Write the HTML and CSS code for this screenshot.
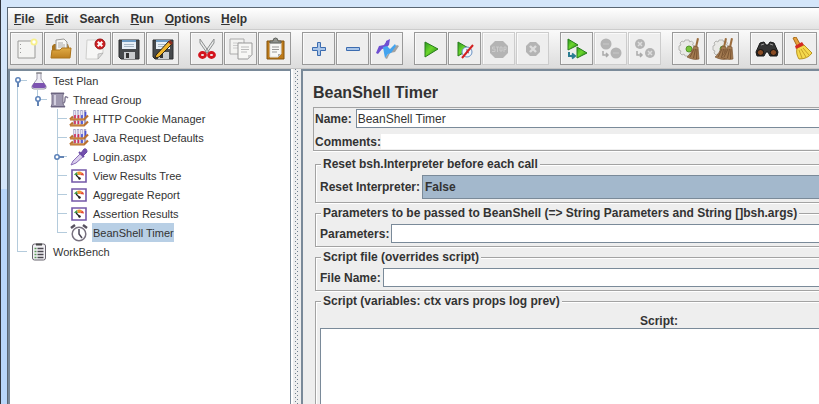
FILE: index.html
```html
<!DOCTYPE html>
<html lang="en">

<head>
    <meta charset="UTF-8">
    <meta name="viewport" content="width=device-width, initial-scale=1.0">
    <title>Apache JMeter</title>
    <link rel="stylesheet" href="styles.css">
</head>

<body>
    <!-- Shared icon shapes -->
    <svg class="defs" aria-hidden="true">
        <defs>
            <linearGradient id="green" x1="0" y1="0" x2="1" y2="1">
                <stop offset="0" stop-color="#2a9a20" />
                <stop offset=".45" stop-color="#6cd62c" />
                <stop offset="1" stop-color="#187a12" />
            </linearGradient>
            <linearGradient id="folder" x1="0" y1="0" x2="0" y2="1">
                <stop offset="0" stop-color="#e0ab45" />
                <stop offset="1" stop-color="#bd8020" />
            </linearGradient>
            <symbol id="floppy" viewBox="0 0 24 24">
                <path d="M2 3h20v19H4l-2-2z" fill="#46494c" stroke="#2b2d2f" />
                <path d="M5 3h14v9H5z" fill="#e8f0f7" />
                <path d="M5 3h14v2H5z" fill="#6f9cc4" />
                <path d="M7 7.500h10M7 9.500h10" stroke="#a8b8c6" />
                <path d="M7 15h11v7H7z" fill="#c9cccf" />
                <path d="M9 16h3v5H9z" fill="#333" />
            </symbol>
            <symbol id="broom" viewBox="0 0 24 24">
                <path d="M20 1l2 .5-2 9-2-.5z" fill="#9b6c3c" />
                <path d="M17 9l4 1 1 12c-4 1-8 0-12-2 3-2 5-6 7-11z" fill="#a37a50" stroke="#7d5836" stroke-width=".7" />
                <path d="M17 12l-4 8M18.500 12l-2 9M20 12l-.5 10" stroke="#6e4a2b" stroke-width=".8" />
            </symbol>
            <symbol id="gear" viewBox="0 0 24 24">
                <path d="M9 4h4l.5 2 2-1 2 2-1 2 2 1v4l-2 1 1 2-2 2-2-1-1 2H9l-1-2-2 1-2-2 1-2-2-1v-4l2-1-1-2 2-2 2 1z" fill="#e9e9e6" stroke="#b5b5b2" />
                <circle cx="13" cy="13" r="3" fill="#78c43a" stroke="#55952c" />
            </symbol>
            <symbol id="tubes" viewBox="0 0 20 18">
                <path d="M5.500 0v15M9 0v15M12.500 0v15M16 0v15" stroke="#a5a2c8" stroke-width="2.400" />
                <path d="M5.500 1v5M9 1v5M12.500 1v5" stroke="#e6e5f4" />
                <path d="M6 5v4M9.500 5v4M9.500 11v3M6 11v3" stroke="#d52f5c" stroke-width="1.600" />
                <path d="M13 5v4M16.500 2v6M13 11v3" stroke="#4a52d8" stroke-width="1.600" />
                <path d="M1 9.500h14l4-4M1 15.500h14l4-4M1 9.500l3-3M1 15.500l3-3" fill="none" stroke="#b9702e" stroke-width="2.200" />
                <path d="M2 9h13M2 15h13" stroke="#dc9a50" stroke-width=".8" />
            </symbol>
            <symbol id="meter" viewBox="0 0 16 14">
                <path d="M1 1h14v12H1z" fill="#fff" stroke="#7458a8" stroke-width="1.600" />
                <path d="M3 6q1-2 3-3l1 3z" fill="#46a04c" />
                <path d="M6 3q3-1 5 .5L9 6H7z" fill="#ee9632" />
                <path d="M11 3.500q2 1 2 3L9 6z" fill="#e34a32" />
                <path d="M5 6l4 4" stroke="#222" stroke-width="1.200" />
                <circle cx="8.500" cy="9.500" r="1.200" fill="#222" />
            </symbol>
            <symbol id="handle" viewBox="0 0 16 16">
                <path d="M8 9v5" stroke="#6484b4" stroke-width="2" />
                <circle cx="8" cy="7" r="2.200" fill="#fff" stroke="#5a80b8" stroke-width="1.500" />
            </symbol>
        </defs>
    </svg>

    <div class="window">
        <nav class="menubar">
            <button type="button"><u>F</u>ile</button>
            <button type="button"><u>E</u>dit</button>
            <button type="button">Search</button>
            <button type="button"><u>R</u>un</button>
            <button type="button"><u>O</u>ptions</button>
            <button type="button"><u>H</u>elp</button>
        </nav>

        <div class="toolbar">
            <div class="group">
                <button type="button" aria-label="New"><svg viewBox="0 0 24 24">
                    <path d="M3 4h17v17H3z" fill="#f4f4f2" stroke="#9a9a98" />
                    <path d="M5.500 7v1M5.500 11v1M5.500 15v1" stroke="#999" />
                    <circle cx="19" cy="5" r="3.500" fill="#f8f08c" />
                    <circle cx="19" cy="5" r="1.700" fill="#fff" />
                </svg></button>
                <button type="button" aria-label="Open"><svg viewBox="0 0 24 24">
                    <path d="M3 9l2-2h14l1 3v11H3z" fill="#a97420" />
                    <path d="M7 3l8-1 3 3v10H7z" fill="#f7f7f5" stroke="#9c9c9a" />
                    <path d="M9 6h5M9 8h7M9 10h7" stroke="#aaa" />
                    <path d="M2 21l1-8h8l2-2h9l-1 10z" fill="url(#folder)" stroke="#ac741b" />
                </svg></button>
                <button type="button" aria-label="Close"><svg viewBox="0 0 24 24">
                    <path d="M4 3h16v13l-5 6H3z" fill="#f7f7f6" stroke="#cfcfcd" />
                    <path d="M20 16l-5 6v-5z" fill="#ddd" stroke="#aaa" stroke-width=".7" />
                    <circle cx="17" cy="7" r="5" fill="#cf1f23" stroke="#981414" />
                    <path d="M14.700 4.700l4.600 4.600M19.300 4.700l-4.600 4.600" stroke="#fff" stroke-width="2" />
                </svg></button>
                <button type="button" aria-label="Save"><svg viewBox="0 0 24 24"><use href="#floppy" width="24" height="24" /></svg></button>
                <button type="button" aria-label="Save as"><svg viewBox="0 0 24 24">
                    <use href="#floppy" width="24" height="24" />
                    <path d="M5 18L18 4l3 3L8 20l-4 1z" fill="#f0b52b" stroke="#2b2417" />
                    <path d="M17 5l2-2 3 3-2 2z" fill="#8b2d20" />
                </svg></button>
            </div>
            <div class="group">
                <button type="button" aria-label="Cut"><svg viewBox="0 0 24 24">
                    <path d="M5 2l9 13-2 1L5 6zM19 2l-9 13 2 1 7-10z" fill="#e9eaea" stroke="#8d9090" />
                    <ellipse cx="7.500" cy="18" rx="3" ry="2.500" fill="none" stroke="#d3131c" stroke-width="2.800" />
                    <ellipse cx="16.500" cy="18" rx="3" ry="2.500" fill="none" stroke="#d3131c" stroke-width="2.800" />
                </svg></button>
                <button type="button" aria-label="Copy"><svg viewBox="0 0 24 24">
                    <path d="M1 2h14v15H1z" fill="#f3f3f1" stroke="#aaa" />
                    <path d="M4 6h9M4 8.500h9M4 11h9" stroke="#ccc" />
                    <path d="M9 6h14v12l-4 4H9z" fill="#f7f7f5" stroke="#999" />
                    <path d="M12 10h8M12 12.500h8M12 15h6" stroke="#bbb" />
                    <path d="M23 18l-4 4v-4z" fill="#ccc" />
                </svg></button>
                <button type="button" aria-label="Paste"><svg viewBox="0 0 24 24">
                    <path d="M4 4h17v18H4z" fill="#bd7a18" stroke="#85540e" />
                    <path d="M7 6h11v11l-3 3H7z" fill="#f8f8f6" stroke="#ddd" />
                    <path d="M9 10h7M9 12.500h7M9 15h5" stroke="#999" />
                    <path d="M7 6V4h3q0-3 2.500-3T15 4h3v2z" fill="#90938e" stroke="#5d605c" />
                    <path d="M18 17l-3 3v-3z" fill="#aaa" />
                </svg></button>
            </div>
            <div class="group">
                <button type="button" aria-label="Expand all"><svg viewBox="0 0 24 24">
                    <path d="M10.500 5.500h3v5h5v3h-5v5h-3v-5h-5v-3h5z" fill="#a9c5e8" stroke="#3c6cb0" />
                </svg></button>
                <button type="button" aria-label="Collapse all"><svg viewBox="0 0 24 24">
                    <path d="M5.500 10.500h13v3h-13z" fill="#a9c5e8" stroke="#3c6cb0" />
                </svg></button>
                <button type="button" aria-label="Toggle"><svg viewBox="0 0 24 24">
                    <path d="M10 21l4-5 5-6 3-2 2 1-4 6-5 1-3 6z" fill="#a2a2a2" />
                    <path d="M11 4l4-2-1 6-3 3-4 1-4 5-2-1 3-7 5-1 2-3z" fill="#6f4fd2" />
                    <path d="M8 10l4-1 3 3 5-5 1 2-5 7-3 1-3 4-1-5z" fill="#43a4ef" />
                </svg></button>
            </div>
            <div class="group">
                <button type="button" aria-label="Start"><svg viewBox="0 0 24 24">
                    <path d="M6 5l13 7-13 8z" fill="url(#green)" stroke="#287d1c" />
                </svg></button>
                <button type="button" aria-label="Start no pauses"><svg viewBox="0 0 24 24">
                    <path d="M5 5l12 7-12 7z" fill="url(#green)" stroke="#287d1c" />
                    <circle cx="14" cy="15" r="5" fill="#eef4fb" stroke="#6b93c4" />
                    <path d="M14 12v3l2 1" fill="none" stroke="#557" />
                    <path d="M9 21L20 8" stroke="#d32020" stroke-width="2" />
                </svg></button>
                <button type="button" aria-label="Stop" disabled><svg viewBox="0 0 24 24">
                    <path d="M8 4h8l5 5v7l-5 5H8l-5-5V9z" fill="#b4b4b4" />
                    <path d="M8 10H5.500v2H8v2.500H5M9 10h3M10.500 10v5M13 10h2v4h-2zM17 15v-5h2v2.500h-2" fill="none" stroke="#cbcbcb" />
                </svg></button>
                <button type="button" aria-label="Shutdown" disabled><svg viewBox="0 0 24 24">
                    <path d="M9 5h6l4 4v6l-4 4H9l-4-4V9z" fill="#b4b4b4" />
                    <path d="M9 9l6 6M15 9l-6 6" stroke="#ddd" stroke-width="2.400" />
                </svg></button>
            </div>
            <div class="group">
                <button type="button" aria-label="Remote start all"><svg viewBox="0 0 24 24">
                    <path d="M3 2l10 6-10 5z" fill="url(#green)" stroke="#287d1c" />
                    <path d="M12 10l10 6-10 5z" fill="url(#green)" stroke="#287d1c" />
                    <path d="M4 15v4h5M7 16.500L10 19l-3 2.500" fill="none" stroke="#2b7d92" stroke-width="2" />
                </svg></button>
                <button type="button" aria-label="Remote stop all" disabled><svg viewBox="0 0 24 24">
                    <circle cx="7" cy="7" r="5.500" fill="#b4b4b4" />
                    <circle cx="17" cy="16" r="5.500" fill="#b4b4b4" />
                    <path d="M4 7h6M14 16h6" stroke="#bebebe" stroke-width="2" />
                    <path d="M4 14v4h5M7 16l2 2-2 2" fill="none" stroke="#aaa" stroke-width="1.500" />
                </svg></button>
                <button type="button" aria-label="Remote shutdown all" disabled><svg viewBox="0 0 24 24">
                    <circle cx="7" cy="7" r="5" fill="#b4b4b4" />
                    <circle cx="17" cy="16" r="5" fill="#b4b4b4" />
                    <path d="M5 5l4 4M9 5L5 9M15 14l4 4M19 14l-4 4" stroke="#ddd" stroke-width="1.500" />
                    <path d="M4 14v4h5M7 16l2 2-2 2" fill="none" stroke="#aaa" stroke-width="1.500" />
                </svg></button>
            </div>
            <div class="group">
                <button type="button" aria-label="Clear"><svg viewBox="0 0 24 24">
                    <use href="#gear" x="-1" y="-1" width="24" height="24" />
                    <use href="#broom" width="24" height="24" />
                </svg></button>
                <button type="button" aria-label="Clear all"><svg viewBox="0 0 24 24">
                    <use href="#gear" x="-1" y="-1" width="24" height="24" />
                    <use href="#broom" x="-6" width="24" height="24" />
                    <use href="#broom" width="24" height="24" />
                </svg></button>
            </div>
            <div class="group">
                <button type="button" aria-label="Search"><svg viewBox="0 0 24 24">
                    <path d="M5 6l4-1 2 3h2l2-3 4 1 4 9-1 4h-7l-2-4h-2l-2 4H2l-1-4z" fill="#343434" stroke="#161616" />
                    <path d="M6 8l3-1M15 7l3 1" stroke="#999" />
                    <ellipse cx="5.500" cy="15.500" rx="3.200" ry="3" fill="#8a4c24" stroke="#111" />
                    <ellipse cx="18.500" cy="15.500" rx="3.200" ry="3" fill="#8a4c24" stroke="#111" />
                </svg></button>
                <button type="button" aria-label="Reset search"><svg viewBox="0 0 24 24">
                    <path d="M4 1l3-1 4 7-3 2z" fill="#e7a13e" stroke="#a96c17" />
                    <path d="M8 11l7-3 8 8c-3 4-7 6-13 6-2-3-3-7-2-11z" fill="#f5d94c" stroke="#b99420" />
                    <path d="M10 13l3 8M12 12l5 8M14 11l6 7" stroke="#c7a127" />
                    <path d="M6 9l7-4 2 3-8 4z" fill="#d42a22" />
                </svg></button>
            </div>
        </div>

        <div class="workspace">
            <aside class="tree-pane">
                <ul class="tree">
                    <li>
                        <div class="node">
                            <button type="button" class="handle" aria-label="Collapse Test Plan"><svg><use href="#handle" /></svg></button>
                            <svg class="icon" viewBox="0 0 18 18">
                                <path d="M7 1h4v6l5 7q1 3-2 3H4q-3 0-2-3l5-7z" fill="#eeedf4" stroke="#9a98a8" />
                                <path d="M4 11h10l2 3q0 2-2 2H4q-2 0-2-2z" fill="#7c52b0" />
                                <path d="M6 1h6" stroke="#777" />
                            </svg>
                            <span class="label">Test Plan</span>
                        </div>
                        <ul>
                            <li>
                                <div class="node">
                                    <button type="button" class="handle" aria-label="Collapse Thread Group"><svg><use href="#handle" /></svg></button>
                                    <svg class="icon" viewBox="0 0 18 18">
                                        <path d="M1 2h13l-1 2v9l2 3H1l1-3V4z" fill="#9f99b0" stroke="#787189" />
                                        <path d="M5 4v10" stroke="#d2cede" stroke-width="2" />
                                        <path d="M1 2.500h13M1 15.500h14" stroke="#6b6480" />
                                        <path d="M13 12q2 0 2-4t3-1" fill="none" stroke="#817b93" stroke-width="1.500" />
                                    </svg>
                                    <span class="label">Thread Group</span>
                                </div>
                                <ul>
                                    <li>
                                        <div class="node">
                                            <span class="handle"></span>
                                            <svg class="icon"><use href="#tubes" /></svg>
                                            <span class="label">HTTP Cookie Manager</span>
                                        </div>
                                    </li>
                                    <li>
                                        <div class="node">
                                            <span class="handle"></span>
                                            <svg class="icon"><use href="#tubes" /></svg>
                                            <span class="label">Java Request Defaults</span>
                                        </div>
                                    </li>
                                    <li>
                                        <div class="node">
                                            <button type="button" class="handle closed" aria-label="Expand Login.aspx"><svg><use href="#handle" /></svg></button>
                                            <svg class="icon" viewBox="0 0 18 18">
                                                <path d="M1 17l2-4 8-8 3 3-8 7z" fill="#d9cdec" stroke="#8a6db8" />
                                                <path d="M9 4l5 5" stroke="#6a4aa4" stroke-width="2" />
                                                <path d="M11 5l3-4q3-1 3 3l-4 4z" fill="#7450ae" stroke="#6a4aa4" />
                                            </svg>
                                            <span class="label">Login.aspx</span>
                                        </div>
                                    </li>
                                    <li>
                                        <div class="node">
                                            <span class="handle"></span>
                                            <svg class="icon small"><use href="#meter" /></svg>
                                            <span class="label">View Results Tree</span>
                                        </div>
                                    </li>
                                    <li>
                                        <div class="node">
                                            <span class="handle"></span>
                                            <svg class="icon small"><use href="#meter" /></svg>
                                            <span class="label">Aggregate Report</span>
                                        </div>
                                    </li>
                                    <li>
                                        <div class="node">
                                            <span class="handle"></span>
                                            <svg class="icon small"><use href="#meter" /></svg>
                                            <span class="label">Assertion Results</span>
                                        </div>
                                    </li>
                                    <li>
                                        <div class="node selected">
                                            <span class="handle"></span>
                                            <svg class="icon" viewBox="0 0 18 18">
                                                <circle cx="9" cy="10" r="6.800" fill="#fff" stroke="#78717f" stroke-width="1.500" />
                                                <path d="M1 4l4-3M17 4l-4-3" stroke="#57515e" stroke-width="2.400" />
                                                <path d="M9 5v5l3 4" fill="none" stroke="#4e4859" stroke-width="1.500" />
                                            </svg>
                                            <span class="label">BeanShell Timer</span>
                                        </div>
                                    </li>
                                </ul>
                            </li>
                        </ul>
                    </li>
                    <li>
                        <div class="node">
                            <span class="handle"></span>
                            <svg class="icon" viewBox="0 0 18 18">
                                <rect x="2.500" y="1" width="13" height="16" rx="2" fill="#f2f1f5" stroke="#68646e" />
                                <path d="M6 1.500h6" stroke="#444" stroke-width="2" />
                                <path d="M7.500 5.500h6M7.500 8.500h6M7.500 11.500h6M7.500 14.500h6" stroke="#4b4850" stroke-width="1.500" />
                                <path d="M4.500 5.500h2M4.500 8.500h2M4.500 11.500h2M4.500 14.500h2" stroke="#5a9a5a" stroke-width="1.500" />
                            </svg>
                            <span class="label">WorkBench</span>
                        </div>
                    </li>
                </ul>
            </aside>

            <div class="divider"></div>

            <main class="editor">
                <form class="editor-form">
                    <h1>BeanShell Timer</h1>
                    <div class="name-panel">
                        <div class="field">
                            <label for="name">Name:</label>
                            <input type="text" id="name" value="BeanShell Timer">
                        </div>
                        <div class="field comments">
                            <label for="comments">Comments:</label>
                            <input type="text" id="comments">
                        </div>
                    </div>

                    <fieldset>
                        <legend>Reset bsh.Interpreter before each call</legend>
                        <div class="field">
                            <label for="reset">Reset Interpreter:</label>
                            <select id="reset">
                                <option>False</option>
                                <option>True</option>
                            </select>
                        </div>
                    </fieldset>

                    <fieldset>
                        <legend>Parameters to be passed to BeanShell (=&gt; String Parameters and String []bsh.args)</legend>
                        <div class="field">
                            <label for="parameters">Parameters:</label>
                            <input type="text" id="parameters">
                        </div>
                    </fieldset>

                    <fieldset>
                        <legend>Script file (overrides script)</legend>
                        <div class="field">
                            <label for="filename">File Name:</label>
                            <input type="text" id="filename">
                        </div>
                    </fieldset>

                    <fieldset class="script">
                        <legend>Script (variables: ctx vars props log prev)</legend>
                        <label for="script">Script:</label>
                        <textarea id="script"></textarea>
                    </fieldset>
                </form>
            </main>
        </div>
    </div>
</body>

</html>
```
FILE: styles.css
```css
* {
    box-sizing: border-box;
}

body {
    margin: 0;
    height: 100vh;
    overflow: hidden;
    padding: 7px 0 0 6px;
    border-left: 1px solid #30343c;
    background: linear-gradient(#d4e6fa 189px, #b9d7fa 189px);
    font-family: "Liberation Sans", Arial, sans-serif;
    font-size: 12px;
    line-height: 14px;
    color: #333;
}

button,
input,
select,
textarea {
    font: inherit;
    color: inherit;
    margin: 0;
}

.defs {
    display: block;
    width: 0;
    height: 0;
}

.window {
    height: 100%;
    display: flex;
    flex-direction: column;
    border-top: 1px solid #596673;
    border-left: 1px solid #596673;
    background: #eee;
}

/* Menu bar */
.menubar {
    display: flex;
    height: 22px;
    flex: none;
    background: linear-gradient(#fff, #e2e2e2);
    border-bottom: 1px solid #ccc;
}

.menubar button {
    border: 0;
    padding: 0 5px 0 6px;
    background: none;
    font-weight: bold;
}

/* Toolbar */
.toolbar {
    display: flex;
    flex: none;
    gap: 11px;
    padding: 2px;
    height: 39px;
    background: linear-gradient(#fafafa, #dcdcdc);
    border-bottom: 1px solid #c4c4c4;
}

.group {
    display: flex;
    flex: none;
    gap: 1px;
}

.toolbar button {
    display: flex;
    align-items: center;
    justify-content: center;
    width: 33px;
    height: 33px;
    padding: 0;
    border: 1px solid #999;
    background: #eee;
    box-shadow: inset 1px 1px #fafafa;
}

.toolbar button:disabled {
    border-color: #ccc;
}

.toolbar svg {
    width: 24px;
    height: 24px;
}

.workspace {
    display: flex;
    flex: 1;
    min-height: 0;
}

/* Test tree */
.tree-pane {
    flex: none;
    width: 283px;
    background: #fff;
    border: 2px solid #7a8a99;
    border-width: 2px 1px 0 2px;
    overflow: hidden;
    font-size: 11px;
}

.tree,
.tree ul {
    list-style: none;
    margin: 0;
    padding: 0;
}

.tree ul {
    margin-left: 20px;
}

/* vertical line and the tick that leads to the node */
.tree li {
    background:
        linear-gradient(#b4cbdc, #b4cbdc) 7px 0 / 1px 100% no-repeat,
        linear-gradient(#b4cbdc, #b4cbdc) 7px 9px / 10px 1px no-repeat;
}

.tree li:last-child {
    background:
        linear-gradient(#b4cbdc, #b4cbdc) 7px 0 / 1px 10px no-repeat,
        linear-gradient(#b4cbdc, #b4cbdc) 7px 9px / 10px 1px no-repeat;
}

.tree > li:first-child {
    background-position: 7px 9px;
}

.node {
    display: flex;
    align-items: center;
    height: 19px;
}

.handle {
    width: 16px;
    height: 16px;
    padding: 0;
    border: 0;
    background: none;
}

.handle svg {
    display: block;
    width: 16px;
    height: 16px;
}

.closed svg {
    transform: rotate(-90deg);
}

.icon {
    width: 20px;
    height: 18px;
    margin: 0 3px;
}

.icon.small {
    height: 14px;
}

.label {
    padding: 3px 0 2px 1px;
}

.selected .label {
    background: #b8cfe5;
}

/* two staggered columns of dots */
.divider {
    flex: none;
    width: 10px;
    padding: 0 2px;
    border-left: 2px solid #fff;
    background:
        conic-gradient(at 1px 1px, transparent 270deg, #6f7f8f 0) 0 0 / 4px 4px content-box,
        conic-gradient(at 1px 1px, transparent 270deg, #6f7f8f 0) 2px 2px / 4px 4px content-box,
        #eee;
}

/* Editor */
.editor {
    flex: 1;
    min-width: 0;
    overflow: hidden;
    border-top: 2px solid #7a8a99;
    border-left: 2px solid #7a8a99;
}

.editor-form {
    display: flex;
    flex-direction: column;
    height: 100%;
    min-width: 700px;
    padding: 12px 0 0 10px;
}

.editor h1 {
    margin: 0 0 4px;
    font-size: 16px;
    line-height: 20px;
}

.editor label,
.editor legend,
.editor select {
    font-weight: bold;
}

.name-panel {
    display: grid;
    gap: 6px;
    margin-bottom: 6px;
    padding: 1px;
    border: 1px solid #a3a3a3;
    box-shadow: 0 1px #fff;
}

.field {
    display: flex;
    align-items: center;
    gap: 2px;
}

.name-panel .field {
    gap: 4px;
}

.name-panel .comments {
    gap: 0;
}

.field input,
.field select {
    flex: 1;
    min-width: 0;
    height: 19px;
    padding: 0 1px;
    border: 1px solid #7a8a99;
    border-radius: 0;
    background: #fff;
}

.field select {
    appearance: none;
    height: 24px;
    padding: 0 2px;
    background: #a3b8cc;
}

.comments input {
    height: 15px;
    border: 0;
}

fieldset {
    min-width: 0;
    margin: 0 0 3px 2px;
    padding: 4px 4px 3px;
    border: 1px solid #a3a3a3;
    box-shadow: 1px 1px #fff, inset 1px 1px #fff;
}

legend {
    margin-left: 1px;
    padding: 0 2px;
    background: #eee;
}

.script {
    flex: 1 0 160px;
    padding-top: 6px;
}

.script label {
    display: block;
    text-align: center;
}

.script textarea {
    display: block;
    width: 100%;
    height: 100%;
    resize: none;
    border: 1px solid #7a8a99;
    border-radius: 0;
}
```
